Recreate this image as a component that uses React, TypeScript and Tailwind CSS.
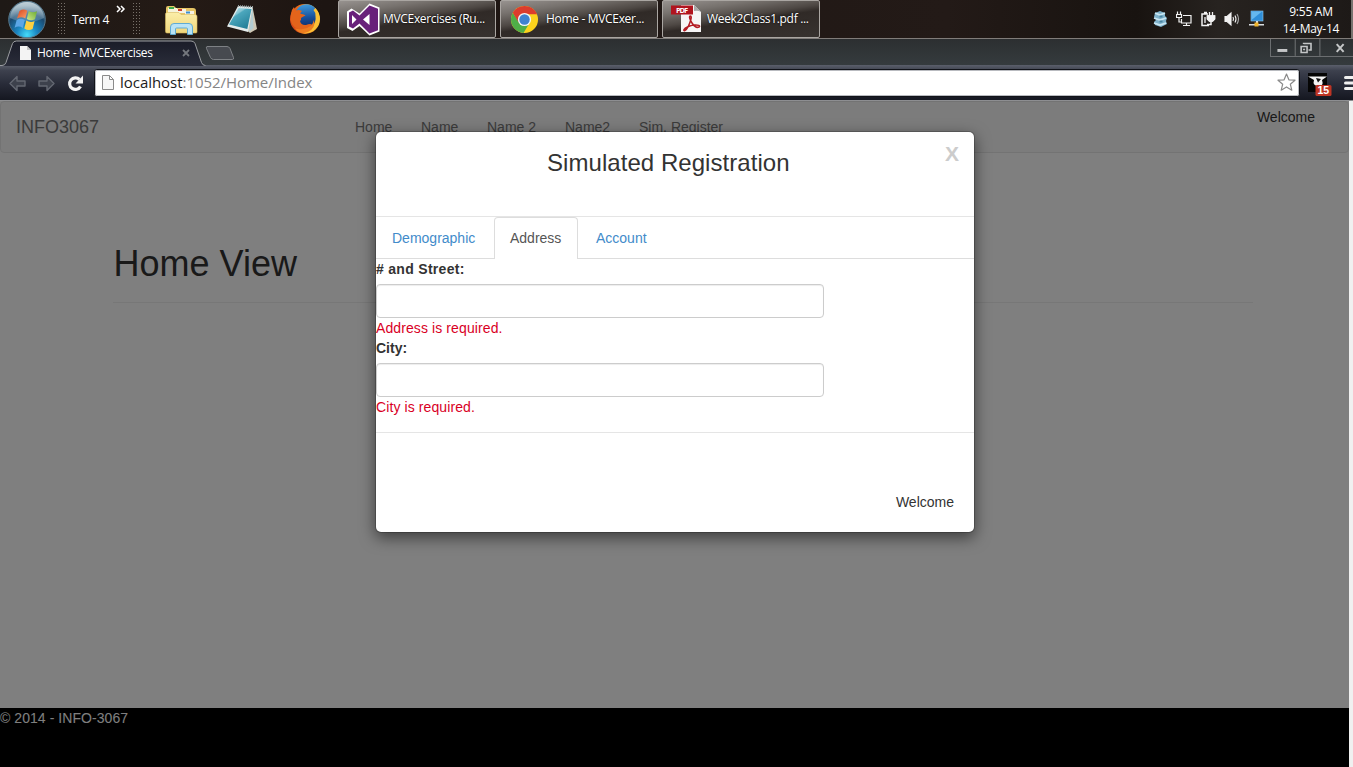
import type { ReactNode } from 'react';

function StartOrb() {
  return (
    <svg width="40" height="38" viewBox="0 0 40 38">
      <defs>
        <radialGradient id="orb" cx="50%" cy="92%" r="80%">
          <stop offset="0" stopColor="#45dcfa" />
          <stop offset="0.35" stopColor="#1a86c2" />
          <stop offset="0.75" stopColor="#1b4a70" />
          <stop offset="1" stopColor="#6d8a9c" />
        </radialGradient>
        <linearGradient id="gloss" x1="0" y1="0" x2="0" y2="1">
          <stop offset="0" stopColor="#dce8ee" stopOpacity="0.75" />
          <stop offset="1" stopColor="#a9c4d2" stopOpacity="0.25" />
        </linearGradient>
        <linearGradient id="flagRed" x1="0" y1="0" x2="1" y2="1">
          <stop offset="0" stopColor="#d9421b" />
          <stop offset="1" stopColor="#f9a36b" />
        </linearGradient>
        <linearGradient id="flagGreen" x1="1" y1="0" x2="0" y2="1">
          <stop offset="0" stopColor="#68ab2e" />
          <stop offset="1" stopColor="#d0e88e" />
        </linearGradient>
      </defs>
      <circle cx="20" cy="19.5" r="18.3" fill="url(#orb)" stroke="#56788c" strokeWidth="1" />
      <path d="M3 18a17 16 0 0 1 34 0q-8 4-17 3.500q-9 .5-17-3.500z" fill="url(#gloss)" />
      <path d="M12.500 11q4-2.800 7.800-.3l-2 7.800q-4-2.500-8.300 0z" fill="url(#flagRed)" />
      <path d="M21.800 11q4 2.500 8.200.3l-2 7.900q-4.200 2.300-8.200-.3z" fill="url(#flagGreen)" />
      <path d="M9.600 20.200q4-2.600 8.200-.1l-2 7.800q-4-2.600-8.200-.2z" fill="#5ba6e6" />
      <path d="M19.300 20.500q4 2.600 8.300.5l-2 8q-4.200 2.200-8.300-.6z" fill="#fdd040" />
    </svg>
  );
}

function Grip() {
  return (
    <svg width="9" height="32" viewBox="0 0 9 32">
      <defs>
        <pattern id="dots" width="3" height="3" patternUnits="userSpaceOnUse">
          <rect width="1" height="1" fill="#777069" />
        </pattern>
      </defs>
      <rect width="8" height="31" fill="url(#dots)" />
    </svg>
  );
}

function Explorer() {
  return (
    <svg width="34" height="32" viewBox="0 0 34 32">
      <defs>
        <linearGradient id="folder" x1="0" y1="0" x2="0" y2="1">
          <stop offset="0" stopColor="#fbeea9" />
          <stop offset="1" stopColor="#f0d67c" />
        </linearGradient>
      </defs>
      <path d="M2 5q0-2 2-2h6l2 2h17q3 0 3 3v19H2z" fill="#e6c566" />
      <path d="M4 5h9v5H4z" fill="#f6f3da" />
      <path d="M5 4h5v2H5z" fill="#3caa4c" />
      <path d="M13 6h9v4h-9z" fill="#f6f3e4" />
      <path d="M14 6h4v2h-4z" fill="#cf3f2d" />
      <path d="M21 8h9v4h-9z" fill="#f6f3e4" />
      <path d="M22 8.500h4v2h-4z" fill="#3d8fd0" />
      <path d="M1.500 11q0-1.500 1.500-1.500H15l2 2h14q2 0 2 2V29q0 1-1 1H3q-1.500 0-1.500-1.500z" fill="url(#folder)" stroke="#d9b85c" strokeWidth=".6" />
      <path d="M6.500 31.500V24q0-3.500 3.500-3.500h15q3.500 0 3.500 3.500v7.500h-5v-5.500q0-1-1-1H12.500q-1 0-1 1v5.500z" fill="#b9e3f6" stroke="#60abd3" strokeWidth="1" />
    </svg>
  );
}

function Notepad() {
  return (
    <svg width="32" height="31" viewBox="0 0 32 31">
      <defs>
        <linearGradient id="pad" x1="0" y1="0" x2=".7" y2="1">
          <stop offset="0" stopColor="#d5eff4" />
          <stop offset=".35" stopColor="#82c3d2" />
          <stop offset=".4" stopColor="#4ca7bd" />
          <stop offset="1" stopColor="#247f98" />
        </linearGradient>
      </defs>
      <path d="M26.500 3l4.500 22-7 4-5-4z" fill="#cfc8b6" />
      <path d="M26.500 3l1 21-4.500 4z" fill="#b3cdd3" />
      <path d="M12 2l14.500 1-4.500 25L1 22.500z" fill="#e5ecec" />
      <path d="M12.500 4l13 1-4.200 20L3 20.500z" fill="url(#pad)" />
      <path d="M12 2l15 1" stroke="#9ba7a8" strokeWidth="2" strokeDasharray="1 1" />
    </svg>
  );
}

function Firefox() {
  return (
    <svg width="32" height="32" viewBox="0 0 32 32">
      <defs>
        <linearGradient id="fox" x1="0" y1=".6" x2="1" y2=".3">
          <stop offset="0" stopColor="#d64518" />
          <stop offset=".55" stopColor="#ee7a1b" />
          <stop offset="1" stopColor="#ffd53d" />
        </linearGradient>
        <linearGradient id="globe" x1=".5" y1="0" x2=".6" y2="1">
          <stop offset="0" stopColor="#3f9bdc" />
          <stop offset=".6" stopColor="#174f9b" />
          <stop offset="1" stopColor="#112d69" />
        </linearGradient>
      </defs>
      <circle cx="16" cy="16" r="15" fill="url(#fox)" />
      <circle cx="17.500" cy="12.500" r="11.300" fill="url(#globe)" />
      <path d="M2 11q0-4 3-7q0 2.500 2 3.500q3-1 6 .5q-2 1.500-1.500 3q3-.5 5 1.500q-3 1-4.500 2.500q.5 2.500-1 3q1 4.500 6 4q4-1.500 6-.5q-3 5-9 5Q4 27 1.500 17z" fill="#e4641b" />
      <path d="M26.500 5q3.500 4 4 9q.5 9-6 14q-7 4-13 1.500q6 .5 11-4.500q5-6 4-12q0-4-2-6z" fill="#fbc136" />
      <path d="M14 26q9-1 11-9q2 8-6 12q-9 3-13-4q3 2 8 1z" fill="#ee7d20" />
    </svg>
  );
}

function VisualStudio() {
  return (
    <svg width="33" height="33" viewBox="0 0 33 33">
      <path d="M22.500 .5l10 4v24l-10 4-10-9.500L5.500 28 0 25V8.500L4.500 5.500l8 5z" fill="#fff" />
      <path d="M22.500 2.500l8.500 3.300v21.400l-8.500 3.300-10-10-6.500 5L2 23.500v-14L6 7.500l6.500 5z" fill="#68217a" />
      <path d="M5 12l4.500 4.500L5 21zM16 16.500l6.500-5.500v11z" fill="#fff" />
    </svg>
  );
}

function ChromeLogo() {
  return (
    <svg width="29" height="29" viewBox="0 0 30 30">
      <circle cx="15" cy="15" r="14" fill="#fbd21c" />
      <path d="M2.900 8A14 14 0 0 0 14 29l6.500-11L9 17z" fill="#4fae48" />
      <path d="M2.900 8L9 18l6-8.500H28Q24 1 15 1Q7 1 2.900 8z" fill="#dc3c2d" />
      <circle cx="15" cy="15" r="6.800" fill="#f4f6f8" />
      <circle cx="15" cy="15" r="5.400" fill="#3f82d0" />
    </svg>
  );
}

function PdfLogo() {
  return (
    <svg width="32" height="30" viewBox="0 0 32 30">
      <path d="M10 1h13l7 7v20H10z" fill="#f6f5f5" />
      <path d="M23 1l7 7q-3-2-7-1z" fill="#a9a9a9" />
      <path d="M19.500 12c-2 0-.5 4 1.500 7s5 5 7 4-1-2.500-5-2-9 2.500-10 4.500 2 1.500 4-2.500 4.500-11 2.500-11z" fill="none" stroke="#b31b22" strokeWidth="1.500" />
      <rect x="0" y="1.500" width="22" height="9" fill="#b0141e" />
      <text x="5" y="8.800" fontSize="7.500" fontWeight="700" fontFamily="Open Sans, sans-serif" fill="#fff" textLength="12">PDF</text>
    </svg>
  );
}

function TaskButton({ icon, label, pad }: { icon: ReactNode; label: string; pad: string }) {
  return (
    <div className={`flex h-[38px] w-[158px] items-center overflow-hidden rounded-[2px] border border-[#aaa6a2] bg-[linear-gradient(172deg,#97928f_0%,#77726e_22%,#4d4743_44%,#302a27_54%,#37322f_100%)] ${pad}`}>
      <span className="w-9 shrink-0">{icon}</span>
      <span className="whitespace-nowrap text-[12px] tracking-[-0.32px] text-white [text-shadow:0_0_2px_#000]">{label}</span>
    </div>
  );
}

function Tray() {
  return (
    <div className="flex items-center gap-2">
      <svg width="16" height="18" viewBox="0 0 16 18">
        <path d="M3 3l5-2 5 2v3l2 2-1 3 1 3-6 3-6-2-1-3 2-2-2-3z" fill="#7fb2cb" />
        <path d="M3 3l5 2 5-2M2 8l6 2 6-2M2 13l6 2 6-2" stroke="#c9e6f2" strokeWidth="1.800" fill="none" />
        <path d="M9 5.500v2M9 10.500v2" stroke="#4783a0" strokeWidth="3" />
      </svg>
      <svg width="16" height="18" viewBox="0 0 16 18" fill="none" stroke="#f2f2f2" strokeWidth="1.200">
        <path d="M7 5.500h8V13H5.500V9M7 15.500h7M10.500 13v2M1.500 1.500v3M4.500 1.500v3M.5 4.500h5v3h-5zM3 7.500v4.500h2.500" />
      </svg>
      <svg width="16" height="18" viewBox="0 0 16 18" fill="none" stroke="#f2f2f2" strokeWidth="1.500">
        <path d="M9 15.500H2V4h6M4 2.500h3" />
        <path d="M5 7v6M9.500 2v4M12.500 2v4" strokeWidth="1.300" />
        <path d="M7.500 6h7v3l-2 2H9.500l-2-2zM11 11v3.500H7" />
        <path d="M7.500 6h7v3l-2 2H9.500l-2-2z" fill="#f2f2f2" />
      </svg>
      <svg width="16" height="18" viewBox="0 0 16 18" fill="none" stroke="#f2f2f2" strokeWidth="1.100">
        <path d="M1 6.500h2L7 3v12L3 11.500H1z" fill="#f2f2f2" />
        <path d="M9 7q1 2 0 4M11 5.500q2 3.500 0 7" />
        <path d="M13 4q3 5 0 10" stroke="#aaa" />
      </svg>
      <svg width="17" height="18" viewBox="0 0 17 18">
        <rect x="3" y="1" width="12" height="10" fill="#2f8ed8" stroke="#8fc8ef" strokeWidth=".6" />
        <path d="M3.500 10L14 1.500H3.500z" fill="#65b8ee" />
        <path d="M8 11h2v3H8zM1 14h15v1.500H1z" fill="#d8dde0" />
        <rect x="6.500" y="12.500" width="4" height="4" fill="#f0b52d" />
      </svg>
    </div>
  );
}

function Taskbar() {
  return (
    <header className="flex h-[39px] items-center border-b border-[#807c79] bg-[linear-gradient(90deg,#1e1916_0%,#241a15_14%,#1d1512_24%,#231a17_70%,#181310_84%,#272320_90%,#1d1917_100%)] font-['Open_Sans','Noto_Sans',sans-serif] text-white">
      <div className="flex w-[338px] shrink-0 items-center pl-[7px]">
        <StartOrb />
        <span className="ml-[11px] w-[14px]"><Grip /></span>
        <span className="w-[44px] whitespace-nowrap pt-px text-[12px] tracking-[-0.4px]">Term 4</span>
        <svg className="mb-5 w-[17px]" width="17" height="8" viewBox="0 0 17 8" fill="none" stroke="#fff" strokeWidth="1.500">
          <path d="M1 1l3 3-3 3M5 1l3 3-3 3" />
        </svg>
        <span className="w-[31px]"><Grip /></span>
        <span className="w-[62px]"><Explorer /></span>
        <span className="w-[63px]"><Notepad /></span>
        <Firefox />
      </div>
      <div className="flex grow gap-1">
        <TaskButton icon={<VisualStudio />} label="MVCExercises (Ru..." pad="pl-2" />
        <TaskButton icon={<ChromeLogo />} label="Home - MVCExer..." pad="pl-[9px]" />
        <TaskButton icon={<PdfLogo />} label="Week2Class1.pdf ..." pad="pl-2" />
      </div>
      <Tray />
      <div className="ml-[11px] w-[70px] pt-px text-center text-[12px] leading-[17px] tracking-[-0.25px]">
        <div>9:55 AM</div>
        <div>14-May-14</div>
      </div>
      <div className="ml-[5px] h-full w-[2px] bg-[#77736f]" />
    </header>
  );
}

function TabStrip() {
  return (
    <div className="flex h-[26px] bg-[linear-gradient(#2c2f31,#353b3e)]">
      <div className="relative h-[27px] w-[204px]">
        <svg className="absolute inset-0" width="240" height="27" viewBox="0 0 240 27">
          <defs>
            <linearGradient id="tab" x1="0" y1="0" x2="0" y2="1">
              <stop offset="0" stopColor="#1a1c28" />
              <stop offset="1" stopColor="#2a2d3a" />
            </linearGradient>
          </defs>
          <path d="M0 26.500h2q3 0 4-3l6.500-19q1-2.500 4-2.500H191q3 0 4 2.500l6.500 19q1 3 4 3V27H0z" fill="url(#tab)" />
          <path d="M0 26.500h2q3 0 4-3l6.500-19q1-2.500 4-2.500H191q3 0 4 2.500l6.500 19q1 3 4 3" fill="none" stroke="#9b9da1" />
          <path d="M207 7.500h20q2 0 3 2l3.500 9q.5 2-1 2h-19q-2 0-3-2l-4-9q-.5-2 .5-2z" fill="#474a50" stroke="#7e8185" />
        </svg>
        <div className="relative flex h-full items-center pb-px pl-5 pt-px text-[12px] font-['Open_Sans',sans-serif] text-white">
          <svg width="11" height="14" viewBox="0 0 11 14"><path d="M0 0h7l4 4v10H0z" fill="#f3f3f3" /><path d="M7 0v4h4" fill="#c3c3c3" /></svg>
          <span className="ml-[6px] w-[145px] whitespace-nowrap tracking-[-0.28px]">Home - MVCExercises</span>
          <svg width="8" height="8" viewBox="0 0 8 8" stroke="#74777d" strokeWidth="1.800"><path d="M1 1l6 6M7 1L1 7" /></svg>
        </div>
      </div>
      <div className="ml-auto flex h-[18px] w-[83px] border-b border-l border-[#6b6e70]">
        <svg width="83" height="18" viewBox="0 0 83 18" fill="none" stroke="#c4c6c7">
          <path d="M24.500 0v17M49.500 0v17" stroke="#727577" />
          <path d="M6.500 11.500h10" strokeWidth="3" />
          <path d="M30.500 7.500h6v6h-6zM33 5V4.500h7.500V11H38" strokeWidth="1.600" />
          <path d="M33 10h1v1h-1z" />
          <path d="M66.500 5l7 8M73.500 5l-7 8" strokeWidth="2" />
        </svg>
      </div>
    </div>
  );
}

function Toolbar() {
  return (
    <div className="flex h-[36px] items-center border-b border-[#8d8e91] bg-[linear-gradient(#5b5f6b_0%,#3d414e_16%,#282b38_55%,#151720_100%)]">
      <svg className="shrink-0" width="94" height="34" viewBox="0 0 94 34">
        <path d="M10 17.500l7-7v4.500h8v5h-8v4.500z" fill="#3d414c" stroke="#646872" strokeWidth="1.400" strokeLinejoin="round" />
        <path d="M54 17.500l-7-7v4.500h-8v5h8v4.500z" fill="#3d414c" stroke="#646872" strokeWidth="1.400" strokeLinejoin="round" />
        <path d="M79.500 13.500A5.800 5.800 0 1 0 80.500 20.500" fill="none" stroke="#f3f3f3" strokeWidth="3.200" />
        <path d="M75.500 17.500h7.500V9.500z" fill="#f3f3f3" />
      </svg>
      <div className="flex h-[28px] w-[1206px] shrink-0 items-center rounded-[3px] border border-[#111319] bg-white pl-[7px] outline outline-1 -outline-offset-2 outline-[#b9bbc0]">
        <svg width="12" height="15" viewBox="0 0 12 15" fill="#f7f7f7" stroke="#8b8b8b"><path d="M.5.5h7l4 4v10H.5zM7.500.5v4h4" /></svg>
        <span className="ml-[6px] grow whitespace-nowrap font-['Open_Sans',sans-serif] text-[15px] leading-none tracking-[-0.04px] text-[#858585]">
          <span className="text-[#1b1b1b]">localhost</span>:1052/Home/Index
        </span>
        <svg className="mr-[3px]" width="19" height="19" viewBox="0 0 19 19" fill="#fff" stroke="#898989" strokeWidth="1.200" strokeLinejoin="round">
          <path d="M9.500 1l2.400 5.800 6.100.4-4.700 4 1.500 6-5.300-3.300-5.300 3.300 1.500-6-4.700-4 6.100-.4z" />
        </svg>
      </div>
      <svg className="ml-[8px] shrink-0" width="25" height="26" viewBox="0 0 25 26">
        <rect x="0" y="3" width="19" height="19" fill="#050505" />
        <path d="M0 6.500h19l-5 3.500q2 6-3 6q-7 0-5-6z" fill="#f4f4f4" />
        <path d="M8 8l5 1-3 3.500z" fill="#111" />
        <rect x="7.500" y="15" width="16" height="11" rx="1.500" fill="#bd3424" />
        <text x="9.500" y="24.300" fontSize="10.500" fontWeight="700" fontFamily="Liberation Sans, sans-serif" fill="#fff">15</text>
      </svg>
      <svg className="ml-[10px] shrink-0" width="10" height="16" viewBox="0 0 10 16" stroke="#f0f0f0" strokeWidth="3" strokeLinecap="round"><path d="M2.500 2.500H10M2.500 8H10M2.500 13.500H10" /></svg>
    </div>
  );
}

function Field({ label, error }: { label: string; error: string }) {
  return (
    <div>
      <label className="block">
        <span className={`mb-[5px] block font-bold text-[#333] ${label.length > 6 ? 'tracking-[0.3px]' : ''}`}>{label}</span>
        <input className="block h-[34px] w-[448px] rounded-[4px] border border-[#ccc] bg-white px-3 shadow-[inset_0_1px_1px_rgba(0,0,0,0.075)] outline-none" />
      </label>
      <p className="tracking-[0.1px] text-[#d9001f]">{error}</p>
    </div>
  );
}

function RegistrationModal() {
  return (
    <section className="h-[402px] w-[600px] overflow-hidden rounded-[6px] border border-black/20 bg-white bg-clip-padding text-[#333] shadow-[0_5px_15px_rgba(0,0,0,0.5)]">
      <div className="flex h-[85px] border-b border-[#e5e5e5] pt-[15px]">
        <h4 className="w-full whitespace-nowrap pl-[171px] text-[24px] leading-[32px] tracking-[0.05px]">Simulated Registration</h4>
        <button className="-mt-[4px] mr-[15px] h-5 text-[21px] font-bold leading-[21px] text-[#ccc]">X</button>
      </div>
      <nav className="flex h-[42px] border-b border-[#ddd] text-[#428bca]">
        <a className="w-[118px] px-4 pt-[11px]">Demographic</a>
        <a className="h-[42px] w-[84px] rounded-t-[4px] border border-b-0 border-[#ddd] bg-white px-[15px] pt-[10px] text-[#555]">Address</a>
        <a className="px-[18px] pt-[11px]">Account</a>
      </nav>
      <div className="h-[173px]">
        <Field label="# and Street:" error="Address is required." />
        <Field label="City:" error="City is required." />
      </div>
      <footer className="border-t border-[#e5e5e5] pr-5 pt-[59px] text-right">Welcome</footer>
    </section>
  );
}

export default function App() {
  return (
    <div className="flex h-[767px] w-[1353px] flex-col overflow-hidden">
      <Taskbar />
      <TabStrip />
      <Toolbar />
      <div className="flex grow bg-[#f0f0f0]">
        <main className="relative flex w-[1349px] flex-col bg-white font-['Liberation_Sans',Arial,sans-serif] text-[14px] leading-[20px] text-[#333]">
          <nav className="flex h-[52px] rounded-[4px] border border-[#e7e7e7] bg-[#f8f8f8] pt-[15px] text-[#777]">
            <span className="w-[339px] pl-[15px] text-[18px]">INFO3067</span>
            <a className="w-[66px] pl-[15px]">Home</a>
            <a className="w-[66px] pl-[15px]">Name</a>
            <a className="w-[78px] pl-[15px]">Name 2</a>
            <a className="w-[74px] pl-[15px]">Name2</a>
            <a className="pl-[15px]">Sim. Register</a>
            <span className="-mt-[10px] ml-auto mr-[33px] text-[#333]">Welcome</span>
          </nav>
          <div className="mx-auto w-[1140px] grow translate-x-[8px] pt-[91px]">
            <h1 className="h-[59px] border-b border-[#eee] pl-px text-[36px] leading-[40px]">Home View</h1>
          </div>
          <footer className="h-[59px] bg-black tracking-[0.06px] text-white">© 2014 - INFO-3067</footer>
          <div className="absolute inset-0 flex items-start bg-black/50 pl-[375px] pt-[30px]">
            <RegistrationModal />
          </div>
        </main>
      </div>
    </div>
  );
}
